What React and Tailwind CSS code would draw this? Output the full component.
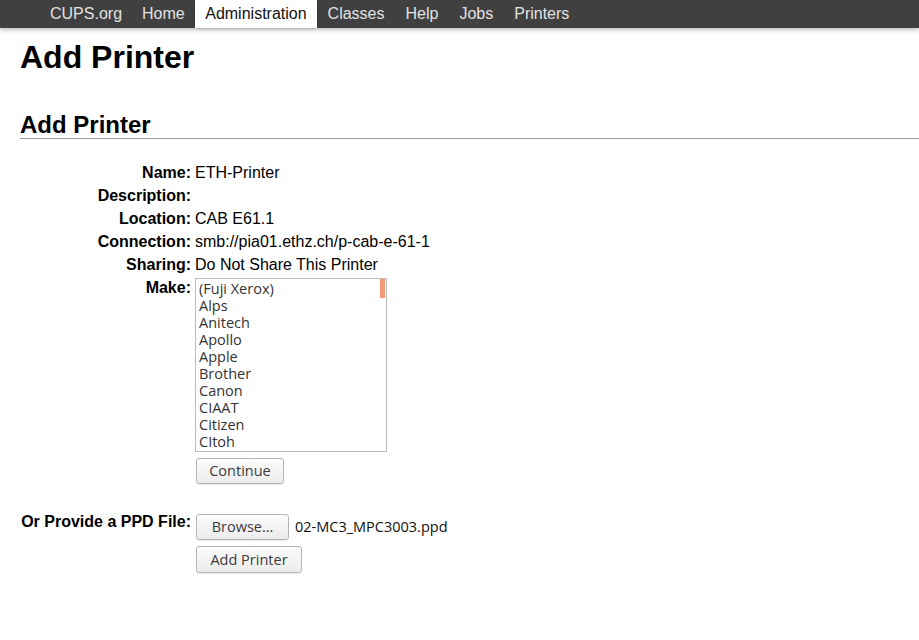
import React from "react";

const makes = ["(Fuji Xerox)", "Alps", "Anitech", "Apollo", "Apple", "Brother", "Canon", "CIAAT", "Citizen", "CItoh"];

const ui = { fontFamily: '"Open Sans", "DejaVu Sans", sans-serif' };

function Btn({ children, w }) {
  return (
    <button
      className={`ml-[1px] rounded-[3px] border border-[#b5b5b5] bg-gradient-to-b from-[#fbfbfb] to-[#ececec] text-[14.5px] leading-[20px] text-[#3c3c3c] shadow-[0_1px_0_rgba(0,0,0,0.08)] ${w}`}
      style={ui}
    >
      {children}
    </button>
  );
}

export default function App() {
  const nav = [
    ["CUPS.org", "px-[10px]"],
    ["Home", "px-[10px]"],
    ["Administration", "px-[10.5px]"],
    ["Classes", "px-[10.5px]"],
    ["Help", "px-[10.5px]"],
    ["Jobs", "px-[10.5px]"],
    ["Printers", "px-[10.5px]"],
  ];
  return (
    <div className="min-h-[640px] w-[919px] bg-white text-black" style={{ fontFamily: '"Liberation Sans", Arial, sans-serif' }}>
      <div className="relative flex h-[28px] items-stretch bg-[#404040] pl-[40px] shadow-[0_2px_4px_rgba(0,0,0,0.25)]">
        {nav.map(([n, p]) => (
          <div
            key={n}
            className={`flex items-center text-[16px] ${p} ${n === "Administration" ? "bg-white text-[#111] shadow-[0_0_4px_rgba(0,0,0,0.2)]" : "text-[#e2e2e2]"}`}
          >
            {n}
          </div>
        ))}
      </div>

      <div className="pl-[20px]">
        <h1 className="mt-[11px] text-[32px] font-bold leading-[37px]">Add Printer</h1>
        <h2 className="mt-[36px] border-b border-[#999] text-[24px] font-bold leading-[26px]">Add Printer</h2>

        <div className="mt-[22px] grid grid-cols-[171px_1fr] gap-x-[4px] text-[16px] leading-[23px]">
          <div className="text-right font-bold">Name:</div>
          <div>ETH-Printer</div>
          <div className="text-right font-bold">Description:</div>
          <div></div>
          <div className="text-right font-bold">Location:</div>
          <div>CAB E61.1</div>
          <div className="text-right font-bold">Connection:</div>
          <div>smb://pia01.ethz.ch/p-cab-e-61-1</div>
          <div className="text-right font-bold">Sharing:</div>
          <div>Do Not Share This Printer</div>

          <div className="text-right font-bold">Make:</div>
          <div className="pt-[2px]">
            <div className="relative h-[174px] w-[192px] overflow-hidden border border-[#bbb] bg-white pl-[3px] pt-[1px]">
              {makes.map((m) => (
                <div key={m} className="h-[17px] text-[14.5px] leading-[17px] text-[#333]" style={ui}>
                  {m}
                </div>
              ))}
              <div className="absolute right-0 top-0 h-full w-[6px]">
                <div className="h-[19px] w-[5px] bg-[#f29a76]"></div>
              </div>
            </div>
            <div className="mt-[6px]">
              <Btn w="h-[26px] w-[88px]">Continue</Btn>
            </div>
          </div>

          <div className="mt-[26px] whitespace-nowrap text-right font-bold">Or Provide a PPD File:</div>
          <div className="mt-[26px] pt-[4px]">
            <div className="flex items-center gap-[6px]">
              <Btn w="h-[26px] w-[93px]">Browse…</Btn>
              <span className="text-[14.5px] leading-[20px] text-[#111]" style={ui}>02-MC3_MPC3003.ppd</span>
            </div>
            <div className="mt-[6px]">
              <Btn w="h-[27px] w-[106px]">Add Printer</Btn>
            </div>
          </div>
        </div>
      </div>
    </div>
  );
}
